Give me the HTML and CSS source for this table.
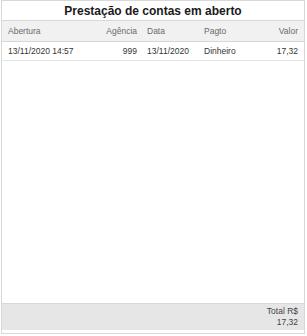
FILE: index.html
```html
<!DOCTYPE html>
<html lang="pt-BR">
<head>
<meta charset="utf-8">
<title>Prestação de contas em aberto</title>
<link rel="stylesheet" href="styles.css">
</head>
<body>
<div class="panel">
  <div class="panel-title">Prestação de contas em aberto</div>
  <div class="grid-head">
    <span class="c-abertura">Abertura</span>
    <span class="c-agencia num">Agência</span>
    <span class="c-data">Data</span>
    <span class="c-pagto">Pagto</span>
    <span class="c-valor num">Valor</span>
  </div>
  <div class="grid-body">
    <div class="grid-row">
      <span class="c-abertura">13/11/2020 14:57</span>
      <span class="c-agencia num">999</span>
      <span class="c-data">13/11/2020</span>
      <span class="c-pagto">Dinheiro</span>
      <span class="c-valor num">17,32</span>
    </div>
  </div>
  <div class="grid-foot">
    <span>Total R$</span>
    <span>17,32</span>
  </div>
</div>
</body>
</html>
```
FILE: styles.css
```css
html, body {
  margin: 0;
  padding: 0;
  background: #ffffff;
}

body {
  font-family: "Liberation Sans", Arial, sans-serif;
  color: #333333;
}

.panel {
  width: 302px;
  height: 332px;
  margin-left: 1px;
  border: 1px solid #d8d8d8;
  display: flex;
  flex-direction: column;
}

.panel-title {
  height: 19px;
  line-height: 20px;
  text-align: center;
  font-size: 12px;
  font-weight: bold;
  color: #1a1a1a;
  border-bottom: 1px solid #d8d8d8;
}

.grid-head,
.grid-row {
  display: grid;
  grid-template-columns: 84px 45px 67px 46px 1fr;
  padding: 0 6px;
  font-size: 8.5px;
}

.grid-head {
  height: 20px;
  align-items: center;
  background: #f1f1f1;
  color: #6a6a6a;
  border-bottom: 1px solid #d8d8d8;
}

.grid-body {
  flex: 1;
}

.grid-row {
  height: 18px;
  align-items: center;
  color: #333333;
  border-bottom: 1px solid #e4e4e4;
}

.num {
  text-align: right;
}

.c-data { padding-left: 10px; }

.grid-foot {
  height: 26px;
  background: #e6e6e6;
  border-top: 1px solid #d8d8d8;
  border-bottom: 3px solid #ffffff;
  display: flex;
  flex-direction: column;
  align-items: flex-end;
  justify-content: center;
  padding-right: 6px;
  font-size: 8.5px;
  line-height: 11px;
  color: #444444;
}
```
